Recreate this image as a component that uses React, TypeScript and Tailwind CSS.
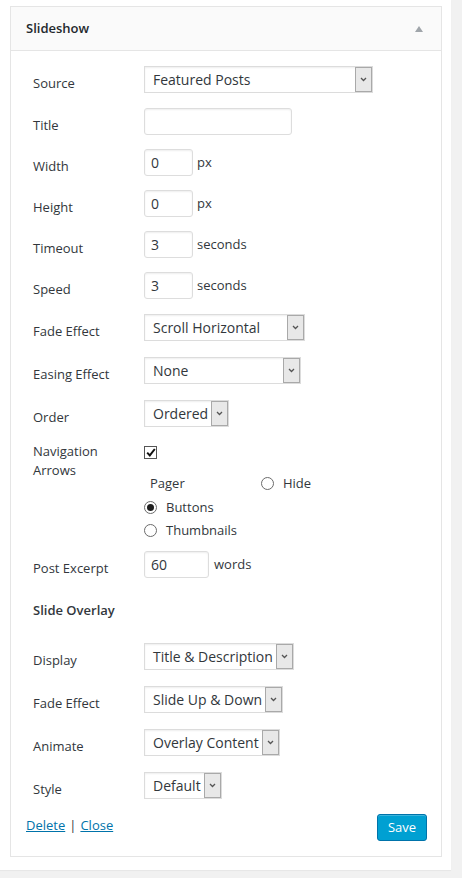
import React from "react";

const Chevron = () => (
  <svg width="7" height="5" viewBox="0 0 7 5" className="block">
    <path d="M1 1 L3.5 3.5 L6 1" fill="none" stroke="#555" strokeWidth="1.3" />
  </svg>
);

function Select({ value, width }: { value: string; width: number }) {
  return (
    <div
      className="relative flex h-[27px] items-center border border-[#dcdcdc] bg-white shadow-[inset_0_1px_2px_rgba(0,0,0,0.07)]"
      style={{ width }}
    >
      <span className="pl-[8px] text-[14px] leading-none text-[#32373c]">{value}</span>
      <div className="absolute right-0 top-0 flex h-[25px] w-[17px] items-center justify-center border border-[#a9a9a9] bg-[#e8e8e8]">
        <Chevron />
      </div>
    </div>
  );
}

function Input({ value, width }: { value?: string; width: number }) {
  return (
    <div
      className="flex h-[27px] items-center rounded-[3px] border border-[#dddddd] bg-white shadow-[inset_0_1px_2px_rgba(0,0,0,0.07)]"
      style={{ width }}
    >
      <span className="pl-[6px] text-[14px] leading-none text-[#32373c]">{value}</span>
    </div>
  );
}

function Row({ label, children, mt }: { label: string; children: React.ReactNode; mt: string }) {
  return (
    <div className={`flex items-center ${mt}`}>
      <div className="w-[111px] shrink-0 pt-[7px] text-[13px] leading-none text-[#32373c]">{label}</div>
      <div className="flex items-center">{children}</div>
    </div>
  );
}

const Radio = ({ checked }: { checked?: boolean }) => (
  <div className="flex h-[13px] w-[13px] items-center justify-center rounded-full border border-[#6b6b6b] bg-white">
    {checked && <div className="h-[7px] w-[7px] rounded-full bg-[#1e1e1e]" />}
  </div>
);

export default function App() {
  return (
    <div className="h-[878px] w-[462px] bg-[#f1f1f1] font-['Open_Sans',sans-serif]">
      <div className="h-[870px] w-[451px] bg-white pt-[6px] shadow-[0_1px_1px_rgba(0,0,0,0.04)]">
        <div className="ml-[10px] w-[432px] border border-[#e5e5e5] bg-white">
          <div className="flex h-[44px] items-center justify-between border-b border-[#e5e5e5] bg-[#fafafa] pl-[15px] pr-[18px]">
            <span className="text-[13px] font-semibold text-[#23282d]">Slideshow</span>
            <svg width="8" height="6" viewBox="0 0 8 6">
              <path d="M0 6 L4 0 L8 6 Z" fill="#a0a5aa" />
            </svg>
          </div>
          <div className="pl-[22px] pb-[15px] pr-[14px]">
            <Row label="Source" mt="mt-[15px]">
              <Select value="Featured Posts" width={229} />
            </Row>
            <Row label="Title" mt="mt-[15px]">
              <Input width={148} />
            </Row>
            <Row label="Width" mt="mt-[14px]">
              <Input value="0" width={49} />
              <span className="ml-[4px] text-[13px] text-[#32373c]">px</span>
            </Row>
            <Row label="Height" mt="mt-[14px]">
              <Input value="0" width={49} />
              <span className="ml-[4px] text-[13px] text-[#32373c]">px</span>
            </Row>
            <Row label="Timeout" mt="mt-[14px]">
              <Input value="3" width={49} />
              <span className="ml-[4px] text-[13px] text-[#32373c]">seconds</span>
            </Row>
            <Row label="Speed" mt="mt-[14px]">
              <Input value="3" width={49} />
              <span className="ml-[4px] text-[13px] text-[#32373c]">seconds</span>
            </Row>
            <Row label="Fade Effect" mt="mt-[15px]">
              <Select value="Scroll Horizontal" width={161} />
            </Row>
            <Row label="Easing Effect" mt="mt-[16px]">
              <Select value="None" width={157} />
            </Row>
            <Row label="Order" mt="mt-[16px]">
              <Select value="Ordered" width={85} />
            </Row>

            <div className="mt-[15px] flex">
              <div className="w-[111px] shrink-0 text-[13px] leading-[19px] text-[#32373c]">
                Navigation
                <br />
                Arrows
              </div>
              <div className="pt-[4px]">
                <div className="flex h-[13px] w-[13px] items-center justify-center border border-[#555] bg-white">
                  <svg width="10" height="9" viewBox="0 0 10 9">
                    <path d="M1.2 4.6 L3.8 7.4 L8.8 1" fill="none" stroke="#111" strokeWidth="2" />
                  </svg>
                </div>
                <div className="mt-[18px] flex items-center">
                  <span className="ml-[6px] w-[111px] text-[13px] leading-none text-[#32373c]">Pager</span>
                  <Radio />
                  <span className="ml-[9px] text-[13px] leading-none text-[#32373c]">Hide</span>
                </div>
                <div className="mt-[11px] flex items-center">
                  <Radio checked />
                  <span className="ml-[9px] text-[13px] leading-none text-[#32373c]">Buttons</span>
                </div>
                <div className="mt-[10px] flex items-center">
                  <Radio />
                  <span className="ml-[9px] text-[13px] leading-none text-[#32373c]">Thumbnails</span>
                </div>
              </div>
            </div>

            <Row label="Post Excerpt" mt="mt-[14px]">
              <Input value="60" width={65} />
              <span className="ml-[5px] text-[13px] text-[#32373c]">words</span>
            </Row>

            <div className="mt-[26px] text-[13px] font-semibold leading-none text-[#32373c]">Slide Overlay</div>

            <Row label="Display" mt="mt-[26px]">
              <Select value="Title & Description" width={150} />
            </Row>
            <Row label="Fade Effect" mt="mt-[16px]">
              <Select value="Slide Up & Down" width={139} />
            </Row>
            <Row label="Animate" mt="mt-[16px]">
              <Select value="Overlay Content" width={136} />
            </Row>
            <Row label="Style" mt="mt-[16px]">
              <Select value="Default" width={78} />
            </Row>

            <div className="-ml-[7px] mt-[15px] flex items-start justify-between">
              <div className="mt-[2px] text-[13px] text-[#32373c]">
                <a className="text-[#0073aa] underline">Delete</a>
                <span className="mx-[4px]">|</span>
                <a className="text-[#0073aa] underline">Close</a>
              </div>
              <button className="h-[27px] w-[50px] rounded-[3px] border border-[#0073aa] bg-[#00a0d2] text-[13px] text-white shadow-[inset_0_1px_0_rgba(120,200,230,0.5)]">
                Save
              </button>
            </div>
          </div>
        </div>
      </div>
    </div>
  );
}
